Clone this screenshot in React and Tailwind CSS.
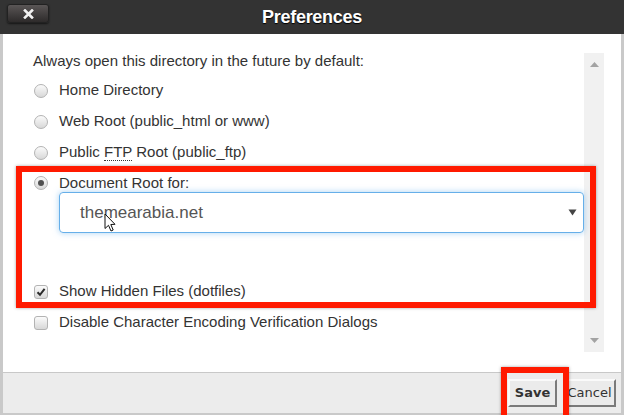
import React from 'react';

const Radio = ({ checked }) => (
  <span className="relative w-[14px] h-[14px] rounded-full border border-[#b3b3b3] bg-gradient-to-b from-[#fbfbfb] to-[#d8d8d8] flex items-center justify-center shrink-0">
    {checked && <span className="w-[6px] h-[6px] rounded-full bg-[#505050]" />}
  </span>
);

const Checkbox = ({ checked }) => (
  <span className="w-[14px] h-[14px] rounded-[3px] border border-[#b3b3b3] bg-gradient-to-b from-[#fbfbfb] to-[#d8d8d8] flex items-center justify-center shrink-0">
    {checked && (
      <svg width="10" height="10" viewBox="0 0 10 10">
        <path d="M1.5 5.2 L4 7.8 L8.6 1.8" fill="none" stroke="#2b2b2b" strokeWidth="2" />
      </svg>
    )}
  </span>
);

const Row = ({ children, className = '' }) => (
  <div className={`flex items-center h-[31px] pl-[31px] gap-[11px] text-[15px] text-[#333] ${className}`}>
    {children}
  </div>
);

export default function App() {
  return (
    <div className="w-[624px] h-[415px] flex flex-col bg-[#c9c9c9] font-['Liberation_Sans',Arial,sans-serif] overflow-hidden relative">
      {/* title bar */}
      <div className="h-[34px] bg-[#333333] relative flex items-center justify-center shrink-0">
        <button className="absolute left-[7px] top-[4px] w-[42px] h-[19px] rounded-[3px] bg-gradient-to-b from-[#5a5656] to-[#2e2b2b] border border-[#222] shadow-[0_1px_2px_rgba(0,0,0,0.6)] flex items-center justify-center">
          <svg width="11" height="10" viewBox="0 0 11 10">
            <path d="M2 1.5 L9 8.5 M9 1.5 L2 8.5" stroke="#f2f2f2" strokeWidth="2.6" strokeLinecap="square" />
          </svg>
        </button>
        <span className="text-white font-bold text-[18px] tracking-[-0.3px] [text-shadow:0_1px_1px_#000]">Preferences</span>
      </div>

      {/* body */}
      <div className="flex-1 flex flex-col mx-[3px] mb-[2px] bg-white">
        <div className="flex-1 flex">
          <div className="flex-1 flex flex-col">
            <div className="mt-[19px] h-[16px] pl-[30px] text-[15px] leading-[16px] text-[#333]">
              Always open this directory in the future by default:
            </div>
            <Row className="mt-[6px]"><Radio /><span>Home Directory</span></Row>
            <Row><Radio /><span>Web Root (public_html or www)</span></Row>
            <Row>
              <Radio />
              <span>
                Public <span className="border-b border-dotted border-[#333] leading-[14px]">FTP</span> Root (public_ftp)
              </span>
            </Row>
            <div className="flex items-center h-[16px] mt-[7px] pl-[31px] gap-[11px] text-[15px] text-[#333]">
              <Radio checked /><span>Document Root for:</span>
            </div>
            <div className="ml-[56px] mt-[1px] h-[41px] rounded-[4px] border border-[#66afe9] shadow-[0_0_6px_rgba(102,175,233,0.55)] flex items-center justify-between pl-[20px] pr-[6px] relative">
              <span className="text-[17px] text-[#555]">themearabia.net</span>
              <svg width="9" height="7" viewBox="0 0 9 7"><path d="M0.5 0.5 H8.5 L4.5 6.5 Z" fill="#444" /></svg>
              <svg className="absolute left-[44px] top-[20px]" width="12" height="20" viewBox="0 0 12 20">
                <path d="M1 1 V15.5 L4.5 12.3 L7 18 L9.2 17 L6.8 11.5 L11 11.3 Z" fill="#fff" stroke="#111" strokeWidth="1" strokeLinejoin="round" />
              </svg>
            </div>
            <Row className="mt-[43px]"><Checkbox checked /><span>Show Hidden Files (dotfiles)</span></Row>
            <Row><Checkbox /><span>Disable Character Encoding Verification Dialogs</span></Row>
          </div>

          {/* scrollbar */}
          <div className="w-[20px] mt-[19px] h-[299px] bg-[#f1f1f1] flex flex-col items-center justify-between py-[9px]">
            <svg width="9" height="5" viewBox="0 0 9 5"><path d="M0 5 H9 L4.5 0 Z" fill="#a3a3a3" /></svg>
            <svg width="9" height="5" viewBox="0 0 9 5"><path d="M0 0 H9 L4.5 5 Z" fill="#a3a3a3" /></svg>
          </div>
          <div className="w-[17px]" />
        </div>

        {/* footer */}
        <div className="h-[41px] border-t border-[#c8c8c8] bg-[#ececec] flex items-start justify-end gap-[6px] pr-[5px] pt-[6px] shrink-0 font-['DejaVu_Sans',Verdana,sans-serif]">
          <button className="w-[49px] h-[28px] bg-[#ebebeb] border-2 border-t-[#fafafa] border-l-[#fafafa] border-r-[#7a7a7a] border-b-[#7a7a7a] text-[13px] font-bold text-[#333]">Save</button>
          <button className="w-[53px] h-[28px] bg-[#ebebeb] border-2 border-t-[#fafafa] border-l-[#fafafa] border-r-[#7a7a7a] border-b-[#7a7a7a] text-[13px] text-[#333]">Cancel</button>
        </div>
      </div>

      {/* red annotation boxes */}
      <div className="absolute left-[16px] top-[166px] w-[580px] h-[142px] border-[6px] border-[#ff1a00] shadow-[0_0_3px_rgba(0,0,0,0.35)] pointer-events-none" />
      <div className="absolute left-[501px] top-[367px] w-[68px] h-[56px] border-[6px] border-[#ff1a00] shadow-[0_0_3px_rgba(0,0,0,0.35)] pointer-events-none" />
    </div>
  );
}
